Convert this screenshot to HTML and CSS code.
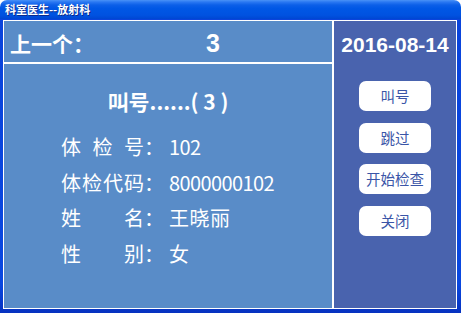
FILE: index.html
```html
<!DOCTYPE html>
<html lang="zh-CN">
<head>
<meta charset="utf-8">
<title>科室医生--放射科</title>
<link rel="stylesheet" href="styles.css">
</head>
<body>
<div class="window">
  <div class="titlebar"><span class="title">科室医生--放射科</span></div>
  <div class="frame">
    <div class="panel">
      <div class="left">
        <div class="prev">
          <span class="prev-label">上一个：</span>
          <span class="prev-num">3</span>
        </div>
        <div class="calling">
          <div class="call-title">叫号......( 3 )</div>
          <div class="rows">
            <div class="row">
              <span class="lab"><span>体</span><span>检</span><span>号</span></span>
              <span class="colon">：</span>
              <span class="val num">102</span>
            </div>
            <div class="row">
              <span class="lab"><span>体</span><span>检</span><span>代</span><span>码</span></span>
              <span class="colon">：</span>
              <span class="val num">8000000102</span>
            </div>
            <div class="row">
              <span class="lab"><span>姓</span><span>名</span></span>
              <span class="colon">：</span>
              <span class="val">王晓丽</span>
            </div>
            <div class="row">
              <span class="lab"><span>性</span><span>别</span></span>
              <span class="colon">：</span>
              <span class="val">女</span>
            </div>
          </div>
        </div>
      </div>
      <div class="right">
        <div class="date">2016-08-14</div>
        <div class="buttons">
          <button class="btn">叫号</button>
          <button class="btn">跳过</button>
          <button class="btn">开始检查</button>
          <button class="btn">关闭</button>
        </div>
      </div>
    </div>
  </div>
</div>
</body>
</html>
```
FILE: styles.css
```css
html, body {
  margin: 0;
  padding: 0;
  background: #ffffff;
  overflow: hidden;
}

.window {
  width: 461px;
  height: 313px;
  display: flex;
  flex-direction: column;
  font-family: "Noto Sans CJK SC", "Noto Sans", sans-serif;
}

.titlebar {
  height: 19px;
  flex: none;
  border-radius: 7px 7px 0 0;
  background: linear-gradient(#4a92f7 0, #2a78f2 2px, #0c5fe8 5px, #0057e5 45%, #0052e0 80%, #0046d2 100%);
  display: flex;
  align-items: center;
  padding-left: 5px;
}

.title {
  color: #ffffff;
  font-size: 11px;
  font-weight: bold;
  line-height: 19px;
  text-shadow: 1px 1px 0 #0b2a8c;
}

.frame {
  flex: 1;
  background: linear-gradient(#0a44dc, #0a48e0 90%, #0632c0);
  padding: 1px 4px 4px 3px;
  box-sizing: border-box;
}

.panel {
  height: 100%;
  box-sizing: border-box;
  background: #ffffff;
  padding: 1px;
  display: grid;
  grid-template-columns: 328px 122px;
  column-gap: 2px;
}

.left {
  display: grid;
  grid-template-rows: 41px 1fr;
  row-gap: 2px;
}

.prev {
  background: #598cc8;
  color: #ffffff;
  font-weight: bold;
  display: flex;
  padding: 3px 0 0 6px;
  box-sizing: border-box;
  line-height: 38px;
}

.prev-label {
  width: 196px;
  font-size: 21px;
}

.prev-num {
  font-family: "Liberation Sans", Arial, sans-serif;
  font-size: 25px;
}

.calling {
  background: #598cc8;
  color: #ffffff;
  padding-top: 22px;
}

.call-title {
  text-align: center;
  font-size: 21px;
  font-weight: bold;
  line-height: 30px;
}

.rows {
  margin-top: 13px;
  padding-left: 57px;
}

.row {
  display: flex;
  font-size: 20px;
  line-height: 35.5px;
}

.lab {
  width: 83px;
  display: flex;
  justify-content: space-between;
}

.colon {
  width: 25px;
}

.val {
  letter-spacing: 0.5px;
}

.val.num {
  letter-spacing: -0.6px;
}

.right {
  background: #4963ae;
  display: flex;
  flex-direction: column;
  align-items: center;
}

.date {
  padding-top: 12px;
  line-height: 24px;
  font-family: "Liberation Sans", Arial, sans-serif;
  font-weight: bold;
  font-size: 21px;
  color: #ffffff;
}

.buttons {
  margin-top: 24px;
  display: flex;
  flex-direction: column;
  gap: 11.7px;
}

.btn {
  width: 72px;
  height: 30px;
  border: none;
  border-radius: 7px;
  background: #ffffff;
  color: #3a55a7;
  font-family: "Noto Sans CJK SC", sans-serif;
  font-size: 14.5px;
  line-height: 30px;
  padding: 0;
  text-align: center;
}
```
